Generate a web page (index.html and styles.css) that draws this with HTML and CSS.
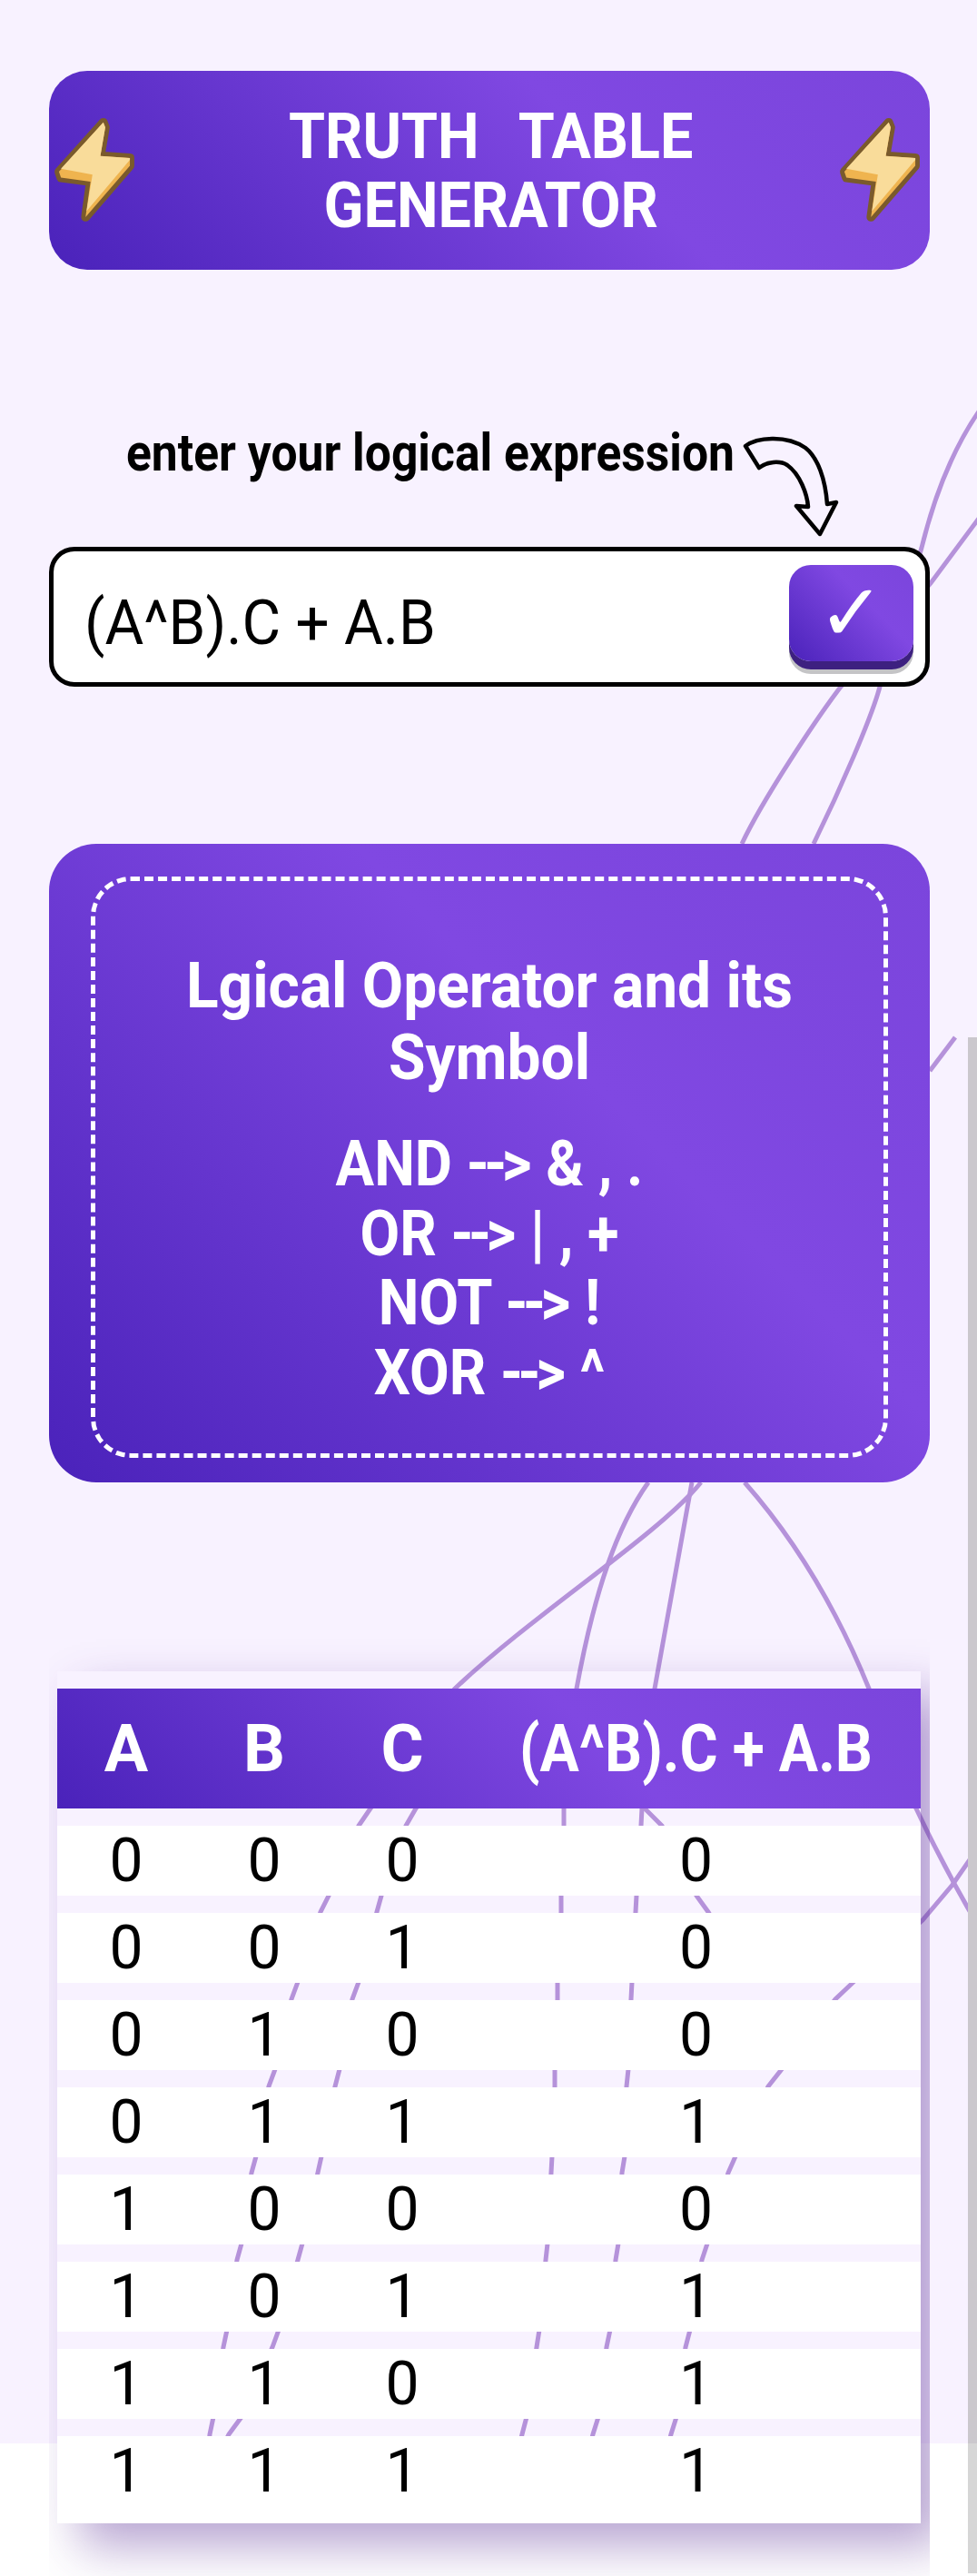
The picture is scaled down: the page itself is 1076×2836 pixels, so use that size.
FILE: index.html
```html
<!DOCTYPE html>
<html>
	<head>
		<meta charset="UTF-8">
		<title>Truth Table Generator</title>
		<link rel="stylesheet" href="styles.css">
	</head>
	<body>
		<!-- background lines, drawn on the full page -->
		<div class="backdrop">
			<svg class="lines" width="1076" height="2690" viewBox="0 0 1076 2690">
				<path d="M1080 450C1047 497 1028 550 1015 603L969 756C960 790 925 870 896 929"/>
				<path d="M1080 568L1025 642L926 756C900 790 840 880 817 929"/>
				<path d="M1024 1179L1052 1142"/>
				<path d="M714 1632C680 1680 655 1750 635 1859L621 1991L621 2010L618 2087L618 2105L614 2182L614 2201L611 2278L611 2297L608 2374L607 2392L603 2470L601 2488L594 2565L591 2584L580 2661L575 2680L572 2692"/>
				<path d="M762 1632L721 1859L707 1991L706 2010L701 2087L700 2105L696 2182L695 2201L692 2278L690 2297L688 2374L685 2392L681 2470L678 2488L672 2565L668 2584L659 2661L653 2680L650 2692"/>
				<path d="M772 1632C725 1690 590 1775 501 1859L408 1991L395 2010L362 2087L353 2105L328 2182L321 2201L303 2278L296 2297L282 2374L277 2392L266 2470L261 2488L250 2565L246 2584L235 2661L231 2680L230 2692"/>
				<path d="M530 1900L458 1991L447 2010L420 2087L415 2105L395 2182L388 2201L374 2278L369 2297L354 2374L350 2392L333 2470L328 2488L307 2565L300 2584L266 2661L252 2680L246 2692"/>
				<path d="M820 1632C880 1700 925 1780 957 1859C975 1920 990 1960 1009 1991C1025 2025 1050 2074 1080 2125"/>
				<path d="M700 1975L710 1991L729 2010L767 2087L780 2105L795 2130"/>
				<path d="M1080 2030L1049 2075L1016 2114L940 2182L920 2201L861 2278L846 2297L810 2374L802 2392L779 2470L773 2488L760 2565L755 2584L745 2661L739 2680L736 2692"/>
			</svg>
		</div>
		<div class="scrollstrip"></div>

		<div class="page">
			<header class="banner">
				<svg class="bolt" viewBox="0 0 92 118"><use href="#boltshape"/></svg>
				<h1 class="banner-title"><span class="squeeze">TRUTH &nbsp;TABLE</span><span class="squeeze">GENERATOR</span></h1>
				<svg class="bolt" viewBox="0 0 92 118"><use href="#boltshape"/></svg>
			</header>

			<div class="prompt">
				<span class="prompt-text">enter your logical expression</span>
				<svg class="prompt-arrow" width="110" height="118" viewBox="0 0 110 118">
					<path d="M6 15C18 6 50 2 72 17C86 28 94 52 96 79L106 77L88 112L62 81L75 82C74 68 66 46 52 36C44 31 30 32 21 39Z"/>
				</svg>
			</div>

			<div class="inputbox">
				<span class="inputtext">(A^B).C + A.B</span>
				<button class="okbtn">✓</button>
			</div>

			<section class="panel">
				<div class="panel-inner">
					<h2 class="panel-title"><span class="squeeze">Lgical Operator and its</span><span class="squeeze">Symbol</span></h2>
					<p class="panel-list">
						<span class="squeeze">AND <span class="dash">--</span>&gt; &amp; , .</span>
						<span class="squeeze">OR <span class="dash">--</span>&gt; | , +</span>
						<span class="squeeze">NOT <span class="dash">--</span>&gt; !</span>
						<span class="squeeze">XOR <span class="dash">--</span>&gt; ^</span>
					</p>
				</div>
			</section>

			<div class="tablewrap">
				<table class="truth">
					<thead>
						<tr><th>A</th><th>B</th><th>C</th><th><span class="squeeze">(A^B).C + A.B</span></th></tr>
					</thead>
					<tbody>
						<tr><td>0</td><td>0</td><td>0</td><td>0</td></tr>
						<tr><td>0</td><td>0</td><td>1</td><td>0</td></tr>
						<tr><td>0</td><td>1</td><td>0</td><td>0</td></tr>
						<tr><td>0</td><td>1</td><td>1</td><td>1</td></tr>
						<tr><td>1</td><td>0</td><td>0</td><td>0</td></tr>
						<tr><td>1</td><td>0</td><td>1</td><td>1</td></tr>
						<tr><td>1</td><td>1</td><td>0</td><td>1</td></tr>
						<tr><td>1</td><td>1</td><td>1</td><td>1</td></tr>
					</tbody>
				</table>
			</div>
		</div>

		<svg class="defs" width="0" height="0">
			<defs>
				<g id="boltshape">
					<path class="bolt-edge" d="M55 10L10 60L12 66L42 70L37 106L82 54L82 46L52 44L57 15Z"/>
					<path class="bolt-side" d="M55 10L10 60L12 66L42 70L37 106L82 54L82 46L52 44L57 15Z"/>
					<path class="bolt-face" d="M55 10L12 57L44 63L38 100L82 48L82 46L52 44L57 15Z"/>
				</g>
			</defs>
		</svg>
	</body>
</html>
```

FILE: styles.css
```css
*{padding:0;margin:0;box-sizing:border-box;}
html,body{background:#fff;}
body{width:1076px;height:2836px;overflow:hidden;position:relative;font-family:Roboto,"Liberation Sans",sans-serif;color:#000;}

.backdrop{position:absolute;left:0;top:0;width:1076px;height:2690px;background:#f8f2ff;}
.lines{display:block;}
.lines path{fill:none;stroke:#b592da;stroke-width:5;}
.scrollstrip{position:absolute;left:1066px;top:1142px;width:10px;height:1691px;background:linear-gradient(#cbc8cd 0,#cbc8cd 1548px,#d6d6d6 1548px);}

.page{position:relative;width:970px;margin-left:54px;padding-top:78px;}

/* squeezes text the way the phone capture did */
.squeeze{display:block;transform:scaleX(.895);white-space:nowrap;}

.banner,.panel,.okbtn,.truth thead tr{background:linear-gradient(45deg,#4a22ba 0%,#8048e2 62%,#7b45dc 100%);}

.banner{height:219px;border-radius:42px;display:flex;align-items:center;justify-content:space-between;padding:0 5px 0 0;color:#fff;}
.banner-title{font-size:71px;font-weight:700;line-height:76px;text-align:center;margin-left:8px;word-spacing:6px;}
.banner-title .squeeze{transform:scaleX(.91);}
.bolt{width:100px;height:128px;display:block;flex:none;}
.bolt-edge{fill:#7a5a2c;stroke:#7a5a2c;stroke-width:9;stroke-linejoin:round;}
.bolt-side{fill:#efb44f;}
.bolt-face{fill:#f9dc9a;}

.prompt{display:flex;align-items:flex-start;margin-top:168px;padding-left:85px;height:137px;}
.prompt-text{font-size:57px;font-weight:700;line-height:62px;margin-top:3px;transform:scaleX(.905);transform-origin:left center;white-space:nowrap;width:669px;flex:none;}
.prompt-arrow{margin:11px 0 0 7px;flex:none;}
.prompt-arrow path{fill:none;stroke:#000;stroke-width:4.5;stroke-linejoin:round;}

.inputbox{height:154px;background:#fff;border:5px solid #000;border-radius:28px;display:flex;align-items:center;justify-content:space-between;padding:0 13px 0 34px;}
.inputtext{font-size:69px;font-weight:400;transform:scaleX(.95);transform-origin:left center;white-space:nowrap;margin-top:13px;}
.okbtn{width:137px;height:106px;margin-top:-8px;border:0;border-radius:24px;color:#fff;font-family:"DejaVu Sans",sans-serif;font-size:88px;line-height:106px;box-shadow:0 9px 0 #3d2080,0 14px 0 #c4c4c6;}

.panel{height:703px;margin-top:173px;border-radius:52px;padding:36px 46px 27px;color:#fff;}
.panel-inner{height:100%;border:5px dashed #fff;border-radius:44px;text-align:center;padding-top:76px;}
.panel-title{font-size:70px;font-weight:700;line-height:79px;}
.panel-title .squeeze{transform:scaleX(.94);}
.panel-list{font-size:70px;font-weight:700;line-height:76.5px;margin-top:39px;}
.panel-list .squeeze{transform:scaleX(.905);}
.dash{letter-spacing:-6px;}

.tablewrap{margin-top:208px;padding:0 10px 0 9px;clip-path:inset(-60px 0 -100px 0);}
.truth{width:951px;border-collapse:separate;border-spacing:0 19px;box-shadow:25px 25px 50px rgba(84,38,146,.42);table-layout:fixed;}
.truth th{height:132px;font-size:72px;font-weight:700;color:#fff;}
.truth th:nth-child(-n+3),.truth td:nth-child(-n+3){width:152px;}
.truth td{height:77px;background:#fff;font-size:66px;font-weight:400;text-align:center;line-height:77px;}
.defs{position:absolute;}
```
